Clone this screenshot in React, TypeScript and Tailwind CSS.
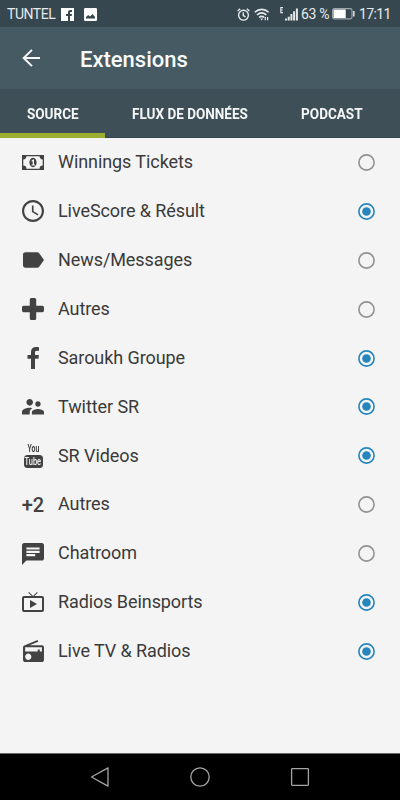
import { useState, type ReactNode } from "react";
import clsx from "clsx";

const TABS = [
  { label: "SOURCE", width: "w-[105px]" },
  { label: "FLUX DE DONNÉES", width: "w-[169px]" },
  { label: "PODCAST", width: "w-[116px]" },
];

function Glyph({ box = "0 0 24 24", size = "w-[22px] h-[22px]", children }: { box?: string; size?: string; children: ReactNode }) {
  return (
    <svg viewBox={box} className={clsx("shrink-0 text-[#424242]", size)} fill="currentColor" aria-hidden="true">
      {children}
    </svg>
  );
}

function MoneyIcon() {
  return (
    <Glyph box="0 0 22 15" size="w-[22px] h-[15px]">
      <path fillRule="evenodd" d="M0 0h22v15H0zM4.400 1.300A3.100 3.100 0 0 1 1.300 4.400v6.200a3.100 3.100 0 0 1 3.100 3.100h13.200a3.100 3.100 0 0 1 3.100-3.100V4.400a3.100 3.100 0 0 1-3.100-3.100z" />
      <ellipse cx="11" cy="7.500" rx="3.600" ry="4.700" />
      <path d="M9.400 5.800l1.500-1.300h1.100v4.900h1v1.100H9.600V9.400h1.100V6.200l-.700.500z" fill="#f4f4f4" />
    </Glyph>
  );
}

function YouTubeIcon() {
  return (
    <span className="flex h-[24px] w-[22px] flex-col items-center leading-none text-[#424242]" aria-label="YouTube">
      <span className="h-[10px] text-[11px] font-bold leading-[10px] scale-x-[0.62] grayscale">You</span>
      <span className="mt-px flex h-[13px] w-[19px] shrink-0 items-center justify-center rounded-[3.5px] bg-[#424242] text-[#f4f4f4]">
        <span className="text-[11.5px] font-medium leading-[13px] scale-x-[0.65] grayscale">Tube</span>
      </span>
    </span>
  );
}

const EXTENSIONS: { name: string; active: boolean; icon: ReactNode }[] = [
  { name: "Winnings Tickets", active: false, icon: <MoneyIcon /> },
  {
    name: "LiveScore & Résult",
    active: true,
    icon: (
      <Glyph box="2 2 20 20">
        <path d="M11.99 2C6.47 2 2 6.48 2 12s4.47 10 9.99 10C17.52 22 22 17.52 22 12S17.52 2 11.99 2zM12 20c-4.42 0-8-3.58-8-8s3.58-8 8-8 8 3.58 8 8-3.58 8-8 8zm.5-13H11v6l5.25 3.15.75-1.23-4.5-2.67z" />
      </Glyph>
    ),
  },
  {
    name: "News/Messages",
    active: false,
    icon: (
      <Glyph box="3 5 19 14" size="w-[21px] h-[16px] ml-px">
        <path d="M17.63 5.84C17.27 5.33 16.67 5 16 5L5 5.01C3.9 5.01 3 5.9 3 7v10c0 1.1.9 1.99 2 1.99L16 19c.67 0 1.27-.33 1.63-.84L22 12l-4.37-6.16z" />
      </Glyph>
    ),
  },
  {
    name: "Autres",
    active: false,
    icon: (
      <Glyph box="0 0 22 22">
        <path d="M9.4 0h3.2q1.6 0 1.6 1.6v6.2h6.2q1.6 0 1.6 1.6v3.2q0 1.6-1.6 1.6h-6.2v6.2q0 1.6-1.6 1.6H9.4q-1.6 0-1.6-1.6v-6.2H1.6Q0 14.200 0 12.600V9.400q0-1.600 1.600-1.600h6.200V1.600Q7.800 0 9.400 0z" />
      </Glyph>
    ),
  },
  {
    name: "Saroukh Groupe",
    active: true,
    icon: (
      <Glyph box="0 0 12 22" size="w-[12px] h-[22px]">
        <path d="M12 .2v3.500H9.900C8.300 3.700 8 4.500 8 5.500v2.400h3.900l-.500 3.900H8V22H4V11.800H.500V7.900H4V5C4 1.700 6 0 9 0c1.400 0 2.600.1 3 .2z" />
      </Glyph>
    ),
  },
  {
    name: "Twitter SR",
    active: true,
    icon: (
      <Glyph box="2 5 20 14" size="w-[22px] h-[15.5px]">
        <path d="M16.500 12c1.380 0 2.490-1.120 2.490-2.500S17.880 7 16.500 7 14 8.120 14 9.500s1.120 2.500 2.500 2.500zM9 11c1.660 0 2.990-1.340 2.990-3S10.660 5 9 5 6 6.340 6 8s1.340 3 3 3zm7.500 3c-1.830 0-5.500.92-5.500 2.750V19h11v-2.250c0-1.830-3.670-2.750-5.500-2.750zM9 13c-2.330 0-7 1.170-7 3.500V19h7v-2.250c0-.85.330-2.340 2.370-3.470C10.500 13.100 9.660 13 9 13z" />
      </Glyph>
    ),
  },
  { name: "SR Videos", active: true, icon: <YouTubeIcon /> },
  {
    name: "Autres",
    active: false,
    icon: <span className="pt-px text-[20px] leading-none font-medium text-[#424242]">+2</span>,
  },
  {
    name: "Chatroom",
    active: false,
    icon: (
      <Glyph box="2 2 20 20">
        <path d="M20 2H4c-1.100 0-1.990.9-1.990 2L2 22l4-4h14c1.100 0 2-.9 2-2V4c0-1.100-.9-2-2-2zM6 9h12v2H6V9zm8 5H6v-2h8v2zm4-6H6V6h12v2z" />
      </Glyph>
    ),
  },
  {
    name: "Radios Beinsports",
    active: true,
    icon: (
      <Glyph box="1 2 22 20" size="w-[22px] h-[20px]">
        <path d="M21 6h-7.590l3.290-3.290L16 2l-4 4-4-4-.700.710L10.590 6H3c-1.100 0-2 .890-2 2v12c0 1.100.9 2 2 2h18c1.100 0 2-.9 2-2V8c0-1.110-.9-2-2-2zm0 14H3V8h18v12zM9 10v8l7-4z" />
      </Glyph>
    ),
  },
  {
    name: "Live TV & Radios",
    active: true,
    icon: (
      <Glyph box="2 1 20 21" size="w-[21px] h-[22px]">
        <path d="M3.240 6.150C2.510 6.430 2 7.170 2 8v12c0 1.100.890 2 2 2h16c1.110 0 2-.9 2-2V8c0-1.110-.890-2-2-2H8.300l8.260-3.340L15.880 1 3.240 6.150zM7 20c-1.660 0-3-1.340-3-3s1.340-3 3-3 3 1.340 3 3-1.340 3-3 3zm13-8h-2v-2h-2v2H4V8h16v4z" />
      </Glyph>
    ),
  },
];

function StatusBar() {
  return (
    <div className="flex h-[27px] shrink-0 items-center bg-[#37474f] pl-[7px] pr-[9px] pt-px text-[14px] text-[#e6eaec]">
      <span className="w-[48px] text-[14px] tracking-[-0.45px]">TUNTEL</span>
      <svg viewBox="0 0 13 13" className="ml-[6px] h-[13px] w-[13px]" aria-hidden="true">
        <path d="M0 0h13v13H0z" fill="#fff" />
        <path d="M7 13V8H5V6h2V4.500C7 2.700 8 2 9.500 2H11v2H9.800c-.600 0-.8.300-.8.900V6h2l-.3 2H9v5z" fill="#37474f" />
      </svg>
      <svg viewBox="0 0 13 13" className="ml-[10px] h-[13px] w-[13px]" aria-hidden="true">
        <rect width="13" height="13" rx="1.200" fill="#fff" />
        <path d="M2 10.500V9l2.200-2 1.800 1.500L8.500 6 11 9v1.500z" fill="#37474f" />
      </svg>

      <svg viewBox="0 0 13 13" className="ml-auto h-[13px] w-[13px]" fill="none" stroke="currentColor" strokeWidth="1.400" aria-hidden="true">
        <circle cx="6.500" cy="7.200" r="4.900" />
        <path d="M6.300 4.300v3.200l2.200 1.400M.600 3L3.200.800M12.400 3L9.800.8" />
      </svg>
      <svg viewBox="0 0 16 13" className="ml-[4px] h-[13px] w-[16px]" fill="none" stroke="currentColor" strokeWidth="1.600" aria-hidden="true">
        <path d="M.8 4.300c4-3.900 9.800-3.900 13.800 0M3 7c2.900-2.700 6.500-2.700 9.400 0M5.100 9.500c1.700-1.500 3.500-1.500 5.200 0" />
        <path d="M6.300 10.500h2.800l-1.400 1.900z" fill="currentColor" stroke="none" />
        <path d="M11.300 9v3.200M13.600 9v3.200" strokeWidth="1.200" />
      </svg>
      <svg viewBox="0 0 18 14" className="ml-[10px] h-[14px] w-[18px]" aria-hidden="true">
        <path d="M3 .600H.800v5H3M.8 3h1.900" fill="none" stroke="currentColor" strokeWidth="1.100" />
        <path d="M5 11.500h2v2H5zM7.700 9.700h2v3.800h-2zM10.400 7h2v6.500h-2zM13.100 4.300h2v9.200h-2zM15.900 1.500h2v12h-2z" fill="currentColor" />
      </svg>
      <span className="ml-[3px] w-[28px] whitespace-nowrap text-[14px] tracking-[-0.3px]">63 %</span>
      <svg viewBox="0 0 23 12" className="ml-[3px] h-[12px] w-[23px]" aria-hidden="true">
        <rect x=".6" y=".6" width="19.400" height="10.300" rx="1.800" fill="none" stroke="#9ba6ab" strokeWidth="1.200" />
        <path d="M1.500 1.500h12.200v8.500H1.500z" fill="#fff" />
        <path d="M21 3h1.600v5.500H21z" fill="#d5dadc" />
      </svg>
      <span className="ml-[4px] w-[32px] whitespace-nowrap text-[14px] tracking-[-0.6px]">17:11</span>
    </div>
  );
}

function Radio({ checked }: { checked: boolean }) {
  return (
    <svg viewBox="0 0 17 17" className="h-[17px] w-[17px]" fill="none" aria-hidden="true">
      <circle cx="8.500" cy="8.500" r="7.600" strokeWidth="1.600" className={checked ? "stroke-[#2586bd]" : "stroke-[#929292]"} />
      {checked && <circle cx="8.500" cy="8.500" r="4.300" fill="#2586bd" />}
    </svg>
  );
}

function NavBar() {
  return (
    <nav className="flex h-[47px] shrink-0 items-center justify-center gap-[80px] border-t border-[#6b6b6b] bg-black">
      <svg viewBox="0 0 20 20" className="h-5 w-5" fill="none" stroke="#a5a5a5" strokeWidth="1.300" strokeLinejoin="round">
        <path d="M1.500 10L18 .9v18.200z" />
      </svg>
      <svg viewBox="0 0 20 20" className="h-5 w-5" fill="none" stroke="#a5a5a5" strokeWidth="1.300">
        <circle cx="10" cy="10" r="9.200" />
      </svg>
      <svg viewBox="0 0 20 20" className="h-5 w-5" fill="none" stroke="#a5a5a5" strokeWidth="1.300">
        <rect x="1.600" y="1.600" width="16.800" height="16.800" rx=".8" />
      </svg>
    </nav>
  );
}

export default function App() {
  const [items, setItems] = useState(EXTENSIONS);
  const [tab, setTab] = useState(0);

  const toggle = (index: number) =>
    setItems(items.map((item, i) => (i === index ? { ...item, active: !item.active } : item)));

  return (
    <div className="flex h-[800px] w-[400px] flex-col overflow-hidden bg-[#f4f4f4] font-['Roboto',sans-serif]">
      <StatusBar />

      <header className="flex h-[62px] shrink-0 items-center bg-[#465a64] pl-[22px] text-[#f8fafa]">
        <svg viewBox="0 0 18 18" className="h-[18px] w-[18px]" fill="none" stroke="currentColor" strokeWidth="2" aria-label="Back">
          <path d="M18 9H1.600M10 .900L1.700 9l8.300 8.100" />
        </svg>
        <h1 className="ml-[40px] mt-[3px] text-[22px] font-medium leading-none">Extensions</h1>
      </header>

      <div className="flex h-[49px] shrink-0 border-b border-[#324650] bg-[#3e4f58]" role="tablist">
        {TABS.map((t, i) => (
          <button
            key={t.label}
            role="tab"
            aria-selected={i === tab}
            onClick={() => setTab(i)}
            className={clsx(
              "-mb-px flex flex-col items-center justify-center whitespace-nowrap border-b-[5px] pt-[6px] text-[14px] font-bold text-[#f5f7f7]",
              t.width,
              i === tab ? "border-[#9cae32]" : "border-transparent"
            )}
          >
            <span className="scale-x-[0.965]">{t.label}</span>
          </button>
        ))}
      </div>

      <ul className="flex-1">
        {items.map((item, i) => (
          <li key={i}>
            <button
              onClick={() => toggle(i)}
              aria-pressed={item.active}
              className="flex h-[48.9px] w-full items-center pl-[22px] pr-[25px] text-left"
            >
              <span className="flex w-[22px] justify-center">{item.icon}</span>
              <span className="ml-[14px] flex-1 pb-[1.5px] text-[18px] tracking-[-0.08px] text-[#3a3a3a]">{item.name}</span>
              <Radio checked={item.active} />
            </button>
          </li>
        ))}
      </ul>

      <NavBar />
    </div>
  );
}
